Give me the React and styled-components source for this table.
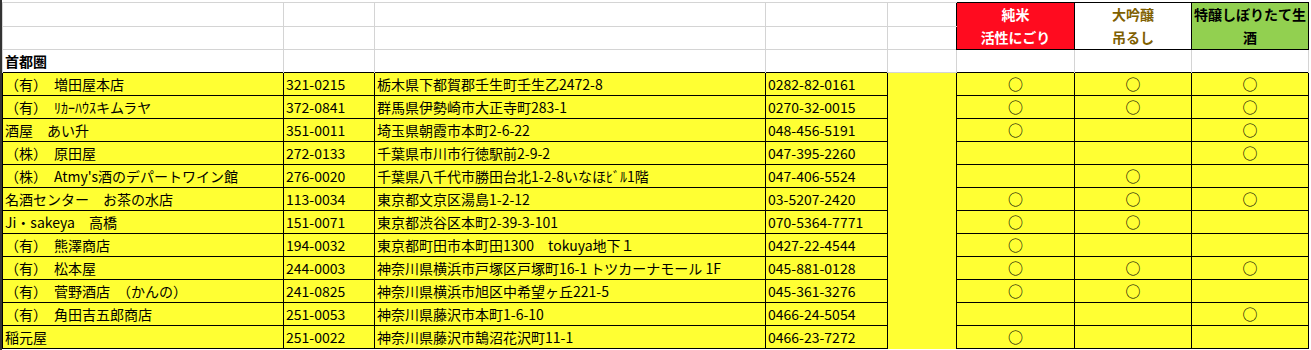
import styled, { createGlobalStyle } from "styled-components";

const GlobalStyle = createGlobalStyle`
  html, body {
    margin: 0;
    padding: 0;
    background: #ffffff;
  }
  body {
    font-family: "Noto Sans CJK JP", "Noto Sans", sans-serif;
    font-size: 14px;
    color: #000;
  }
`;

// 表の列幅（罫線の間隔）
const COLS = [281, 91, 391, 122, 69, 118, 117, 117];

const YELLOW = "#ffff33";
const GRID = "#d4d4d4";

const rows = [
  ["（有）　増田屋本店", "321-0215", "栃木県下都賀郡壬生町壬生乙2472-8", "0282-82-0161", [1, 1, 1]],
  ["（有）　ﾘｶｰﾊｳｽキムラヤ", "372-0841", "群馬県伊勢崎市大正寺町283-1", "0270-32-0015", [1, 1, 1]],
  ["酒屋　あい升", "351-0011", "埼玉県朝霞市本町2-6-22", "048-456-5191", [1, 0, 1]],
  ["（株）　原田屋", "272-0133", "千葉県市川市行徳駅前2-9-2", "047-395-2260", [0, 0, 1]],
  ["（株）　Atmy's酒のデパートワイン館", "276-0020", "千葉県八千代市勝田台北1-2-8いなほﾋﾞﾙ1階", "047-406-5524", [0, 1, 0]],
  ["名酒センター　お茶の水店", "113-0034", "東京都文京区湯島1-2-12", "03-5207-2420", [1, 1, 1]],
  ["Ji・sakeya　高橋", "151-0071", "東京都渋谷区本町2-39-3-101", "070-5364-7771", [1, 1, 0]],
  ["（有）　熊澤商店", "194-0032", "東京都町田市本町田1300　tokuya地下１", "0427-22-4544", [1, 0, 0]],
  ["（有）　松本屋", "244-0003", "神奈川県横浜市戸塚区戸塚町16-1 トツカーナモール 1F", "045-881-0128", [1, 1, 1]],
  ["（有）　菅野酒店　（かんの）", "241-0825", "神奈川県横浜市旭区中希望ヶ丘221-5", "045-361-3276", [1, 1, 0]],
  ["（有）　角田吉五郎商店", "251-0053", "神奈川県藤沢市本町1-6-10", "0466-24-5054", [0, 0, 1]],
  ["稲元屋", "251-0022", "神奈川県藤沢市鵠沼花沢町11-1", "0466-23-7272", [1, 0, 0]],
];

const labels = [
  { tone: "red", lines: ["純米", "活性にごり"] },
  { tone: "plain", lines: ["大吟醸", "吊るし"] },
  { tone: "green", lines: ["特醸しぼりたて生", "酒"] },
];

const tones = {
  red: { bg: "#ff0b1f", fg: "#ffffff" },
  plain: { bg: "#ffffff", fg: "#7f6000" },
  green: { bg: "#92d050", fg: "#000000" },
};

const Window = styled.div`
  display: flex;
  height: 350px;
  overflow: hidden;
`;

const Edge = styled.div`
  width: 2px;
  flex-shrink: 0;
  background: #333333;
`;

const SheetArea = styled.div`
  padding-top: 2px;
`;

const Sheet = styled.table`
  border-collapse: collapse;
  table-layout: fixed;
  width: ${COLS.reduce((a, b) => a + b, 0) + 1}px;
`;

const Row = styled.tr`
  height: 23px;
`;

const Cell = styled.td`
  height: 22px;
  padding: 0 2px;
  line-height: 20px;
  vertical-align: middle;
  white-space: nowrap;
  overflow: hidden;
  border: 1px solid ${({ $ink }) => ($ink ? "#000000" : GRID)};
  background: ${({ $fill }) => $fill || "transparent"};
  font-weight: ${({ $bold }) => ($bold ? 700 : 400)};
  text-align: ${({ $center }) => ($center ? "center" : "left")};
  ${({ $noRight }) => $noRight && "border-right: none;"}
  ${({ $noBottom }) => $noBottom && "border-bottom: none;"}
  ${({ $noTop }) => $noTop && "border-top: none;"}
`;

const Label = styled(Cell)`
  border: 1px solid #000000;
  background: ${({ $tone }) => tones[$tone].bg};
  color: ${({ $tone }) => tones[$tone].fg};
  font-weight: 700;
  text-align: center;
  line-height: 23px;
  padding: 0;
`;

const LabelLine = styled.div`
  height: 23px;
`;

const Mark = styled.span`
  font-size: 15px;
`;

export default function App() {
  return (
    <>
      <GlobalStyle />
      <Window>
        <Edge />
        <SheetArea>
          <Sheet>
            <colgroup>
              {COLS.map((w, i) => (
                <col key={i} style={{ width: w }} />
              ))}
            </colgroup>
            <tbody>
              <Row>
                <Cell />
                <Cell />
                <Cell />
                <Cell />
                <Cell $noRight />
                {labels.map((l) => (
                  <Label key={l.tone} rowSpan={2} $tone={l.tone}>
                    {l.lines.map((t) => (
                      <LabelLine key={t}>{t}</LabelLine>
                    ))}
                  </Label>
                ))}
              </Row>
              <Row>
                <Cell />
                <Cell />
                <Cell />
                <Cell />
                <Cell $noRight />
              </Row>
              <Row>
                <Cell $bold $noBottom>首都圏</Cell>
                <Cell $noBottom />
                <Cell $noBottom />
                <Cell $noBottom />
                <Cell />
                <Cell $noBottom />
                <Cell $noBottom />
                <Cell $noBottom />
              </Row>
              {rows.map(([name, zip, address, phone, marks]) => (
                <Row key={zip + phone}>
                  <Cell $ink $fill={YELLOW}>{name}</Cell>
                  <Cell $ink $fill={YELLOW}>{zip}</Cell>
                  <Cell $ink $fill={YELLOW}>{address}</Cell>
                  <Cell $ink $fill={YELLOW}>{phone}</Cell>
                  <Cell $fill={YELLOW} $noTop $noBottom $noRight />
                  {marks.map((m, i) => (
                    <Cell key={i} $ink $fill={YELLOW} $center>
                      {m ? <Mark>○</Mark> : null}
                    </Cell>
                  ))}
                </Row>
              ))}
            </tbody>
          </Sheet>
        </SheetArea>
      </Window>
    </>
  );
}
